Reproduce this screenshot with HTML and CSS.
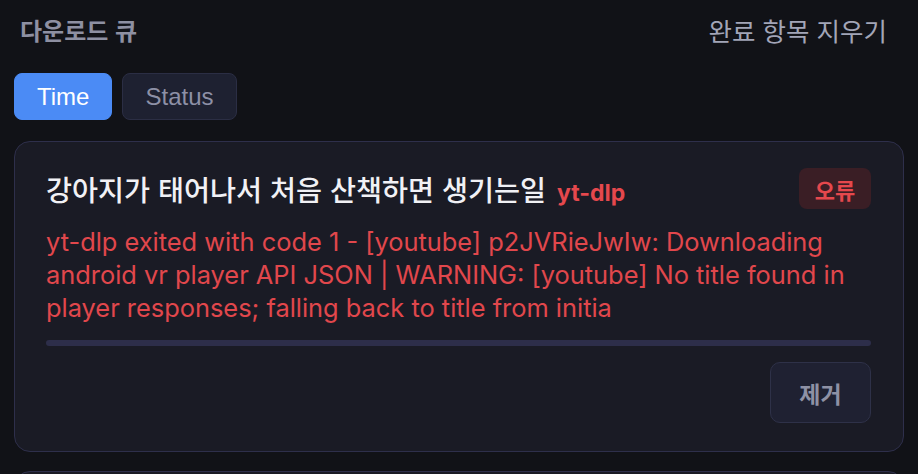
FILE: index.html
```html
<!DOCTYPE html>
<html lang="ko">

<head>
    <meta charset="UTF-8">
    <meta name="viewport" content="width=device-width, initial-scale=1.0">
    <title>다운로드 큐</title>
    <link rel="stylesheet" href="styles.css">
</head>

<body>
    <div class="queue">
        <div class="queue-head">
            <h2 class="queue-title">다운로드 큐</h2>
            <a href="javascript:" class="clear-done">완료 항목 지우기</a>
        </div>
        <div class="sort-tabs">
            <button class="tab active">Time</button>
            <button class="tab">Status</button>
        </div>
        <div class="job-card">
            <div class="job-top">
                <div class="job-name">강아지가 태어나서 처음 산책하면 생기는일 <span class="job-tool">yt-dlp</span></div>
                <span class="badge-error">오류</span>
            </div>
            <p class="job-msg">yt-dlp exited with code 1 - [youtube] p2JVRieJwIw: Downloading android vr player API JSON | WARNING: [youtube] No title found in player responses; falling back to title from initia</p>
            <div class="progress"><div class="progress-bar"></div></div>
            <div class="job-actions">
                <button class="remove">제거</button>
            </div>
        </div>
        <!-- 다음 카드 (화면 아래로 잘림) -->
        <div class="job-card next"></div>
    </div>
</body>

</html>
```

FILE: styles.css
```css
body {
    margin: 0;
    padding: 0;
    background-color: #111217;
    font-family: "Liberation Sans", "Noto Sans CJK KR", sans-serif;
    overflow: hidden;
}

.queue {
    padding: 0 14px;
}

.queue-head {
    display: flex;
    align-items: center;
    justify-content: space-between;
    height: 58px;
    padding: 0 17px 2px 6px;
}

.queue-title {
    margin: 0;
    font-size: 24px;
    font-weight: bold;
    color: #8e90a2;
}

.clear-done {
    font-size: 25.5px;
    color: #a2a5b7;
    text-decoration: none;
}

.sort-tabs {
    display: flex;
    gap: 10px;
    margin-top: 13px;
}

.tab {
    height: 47px;
    padding: 0 22px;
    border: 1px solid #2b2e44;
    border-radius: 8px;
    background-color: #1e2131;
    color: #8d90a6;
    font: normal 24px "Liberation Sans", sans-serif;
    cursor: pointer;
}

.tab.active {
    border-color: #4b8bf5;
    background-color: #4b8bf5;
    color: #fff;
}

.job-card {
    margin-top: 21px;
    padding: 26px 32px 28px 31px;
    border: 1px solid #2e2f4b;
    border-radius: 16px;
    background-color: #1a1b25;
}

.job-card.next {
    margin-top: 19px;
    height: 120px;
}

.job-top {
    display: flex;
    align-items: center;
    justify-content: space-between;
    height: 41px;
}

.job-name {
    font-size: 28.3px;
    font-weight: 500;
    color: #f1f1f5;
}

.job-tool {
    margin-left: 3px;
    font: bold 23px Inter, sans-serif;
    color: #e5484d;
}

.badge-error {
    display: flex;
    align-items: center;
    justify-content: center;
    width: 72px;
    height: 41px;
    border-radius: 8px;
    background-color: #3a1e25;
    color: #e5484d;
    font-size: 22px;
    font-weight: bold;
}

.job-msg {
    margin: 16px 0 0;
    font: normal 25.4px/33px Inter, sans-serif;
    color: #e1474c;
}

.progress {
    margin-top: 16px;
    height: 6px;
    border-radius: 3px;
    background-color: #2d2e4a;
}

.progress-bar {
    width: 0;
    height: 100%;
}

.job-actions {
    display: flex;
    justify-content: flex-end;
    margin-top: 16px;
}

.remove {
    width: 101px;
    height: 61px;
    border: 1px solid #2e3148;
    border-radius: 10px;
    background-color: #1f2132;
    color: #8e91a5;
    font: bold 23px "Liberation Sans", "Noto Sans CJK KR", sans-serif;
    cursor: pointer;
}
```
